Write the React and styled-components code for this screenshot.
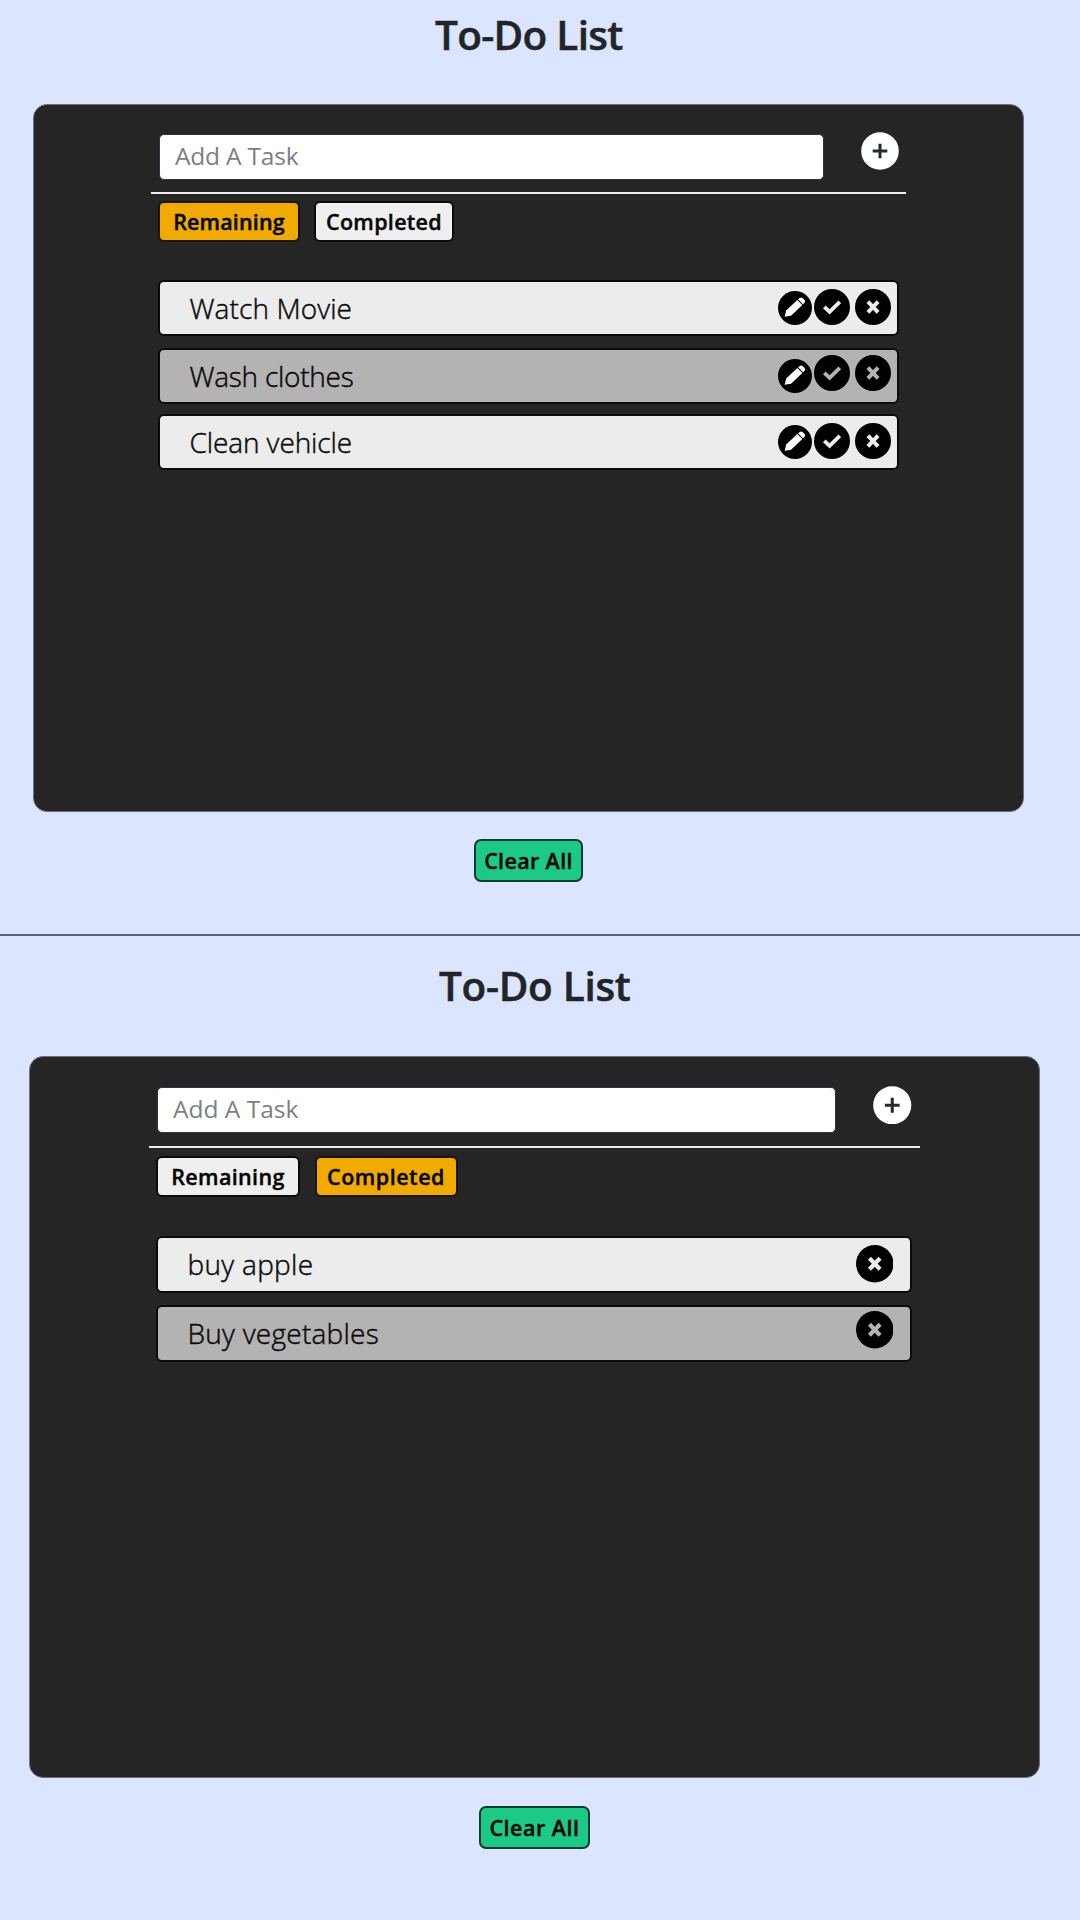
import React from 'react';
import styled, { createGlobalStyle, css } from 'styled-components';

const GlobalStyle = createGlobalStyle`
  *, *::before, *::after { box-sizing: border-box; }
  body {
    margin: 0;
    background: #dbe5fd;
    font-family: 'Open Sans', 'Noto Sans', sans-serif;
    color: #000;
  }
`;

const Page = styled.div`
  width: 1080px;
  height: 1920px;
  display: flex;
  flex-direction: column;
  overflow: hidden;
`;

const Board = styled.section`
  flex: none;
  height: ${(p) => p.$height}px;
  padding-left: ${(p) => p.$left}px;
  padding-top: ${(p) => p.$top}px;
  border-bottom: ${(p) => (p.$divided ? '2px solid #5f636c' : 'none')};
  display: flex;
  flex-direction: column;
  align-items: flex-start;
`;

const Title = styled.h1`
  margin: 0 0 0 ${(p) => p.$indent}px;
  height: ${(p) => p.$height}px;
  font-size: 40.5px;
  line-height: 56px;
  font-weight: 600;
  letter-spacing: ${(p) => p.$spacing}px;
  color: #212529;
  -webkit-text-stroke: 0.5px #212529;
  white-space: nowrap;
`;

const Panel = styled.main`
  width: ${(p) => p.$width}px;
  height: ${(p) => p.$height}px;
  padding: ${(p) => p.$padTop}px 0 0 ${(p) => p.$padLeft}px;
  background: #252525;
  border: 1px solid #6c7079;
  border-radius: 14px;
`;

const AddBar = styled.form`
  display: flex;
  width: ${(p) => p.$width}px;
  height: ${(p) => p.$height}px;
  padding-left: 8px;
  border-bottom: 2px solid #ececec;
`;

const TaskInput = styled.input`
  width: ${(p) => p.$width}px;
  height: 46px;
  margin: 0;
  padding: 0 15px 3px;
  border: 1px solid #2b3440;
  border-radius: 5px;
  background: #fff;
  font-family: inherit;
  font-size: 24.5px;
  letter-spacing: ${(p) => p.$spacing}px;
  outline: none;
  &::placeholder { color: #7b7f83; opacity: 1; }
`;

const PlainButton = styled.button`
  margin: 0;
  padding: 0;
  border: 0;
  background: none;
  color: inherit;
  display: block;
  line-height: 0;
`;

const AddButton = styled(PlainButton)`
  align-self: flex-start;
  margin: -1.5px 0 0 ${(p) => p.$gap}px;
`;

const Tabs = styled.nav`
  display: flex;
  gap: ${(p) => p.$gap}px;
  padding: ${(p) => p.$top}px 0 0 7px;
`;

const buttonText = css`
  font-family: inherit;
  font-weight: 600;
  font-size: 21.5px;
  line-height: 28px;
  color: #060606;
  -webkit-text-stroke: 0.4px #060606;
  white-space: nowrap;
`;

const Tab = styled.button`
  ${buttonText}
  width: ${(p) => p.$width}px;
  height: 41px;
  padding: 0;
  border: 2px solid ${(p) => (p.$active ? '#1c1200' : '#0b0b0b')};
  border-radius: 6px;
  background: ${(p) => (p.$active ? '#f0aa00' : '#efefef')};
  letter-spacing: ${(p) => p.$spacing}px;
`;

const List = styled.ul`
  list-style: none;
  margin: 0;
  padding: ${(p) => p.$top}px 0 0 7px;
  display: flex;
  flex-direction: column;
`;

const Row = styled.li`
  display: flex;
  align-items: flex-start;
  width: ${(p) => p.$width}px;
  height: ${(p) => p.$height}px;
  margin-bottom: ${(p) => p.$gap}px;
  padding-left: 29.5px;
  border: 2px solid #0b0b0b;
  border-radius: 6px;
  background: ${(p) => (p.$shaded ? '#b4b2b3' : '#ececec')};
  color: ${(p) => (p.$shaded ? '#b4b2b3' : '#ececec')};
`;

const TaskName = styled.span`
  flex: 1;
  font-size: 28px;
  line-height: 52px;
  font-weight: 300;
  color: #0a0a0a;
  -webkit-text-stroke: 0.45px #0a0a0a;
  letter-spacing: ${(p) => p.$spacing}px;
  white-space: nowrap;
`;

const Actions = styled.div`
  display: flex;
  align-items: flex-start;
  padding: ${(p) => p.$top}px ${(p) => p.$right}px 0 0;
`;

const EditButton = styled(PlainButton)`
  margin: ${(p) => p.$drop}px 2.5px 0 0;
`;

const DoneButton = styled(PlainButton)`
  margin-right: 5px;
`;

const ClearButton = styled.button`
  ${buttonText}
  width: ${(p) => p.$width}px;
  height: 43.5px;
  margin: ${(p) => p.$top}px 0 0 ${(p) => p.$indent}px;
  padding: 1px 0 0;
  border: 2px solid #12382f;
  border-radius: 7px;
  background: #1bca85;
  letter-spacing: ${(p) => p.$spacing}px;
`;

const PlusIcon = ({ size }) => (
  <svg width={size} height={size} viewBox="0 0 38 38">
    <circle cx="19" cy="19" r="18.8" fill="#fff" />
    <path d="M19 11.7V26.3M11.7 19H26.3" stroke="#252a35" strokeWidth="3" />
  </svg>
);

const PencilIcon = () => (
  <svg width="34" height="34" viewBox="0 0 34 34">
    <circle cx="17" cy="17" r="17" fill="#000" />
    <path d="M6.6 25.8 8.2 19.5 19.3 8.9 24.4 14 13 24.7Z" fill="#fff" />
    <path d="M20.1 8.2 21.8 6.9Q23.3 5.9 24.8 7.3L26.6 9.1Q27.9 10.5 26.4 12L24.9 13.2Z" fill="#fff" />
  </svg>
);

const CheckIcon = () => (
  <svg width="36" height="36" viewBox="0 0 36 36">
    <circle cx="18" cy="18" r="18" fill="#000" />
    <path d="M10.3 17.8 15.6 22.8 25.8 12.8" fill="none" stroke="currentColor" strokeWidth="3.8" />
  </svg>
);

const CrossIcon = ({ size }) => (
  <svg width={size} height={size} viewBox="0 0 36 36">
    <circle cx="18" cy="18" r="18" fill="#000" />
    <path d="M12.9 12.7 23.1 23.3M23.1 12.7 12.9 23.3" fill="none" stroke="currentColor" strokeWidth="4" />
  </svg>
);

const boards = [
  {
    active: 'Remaining',
    board: { $height: 936, $left: 33, $top: 6.5, $divided: true },
    title: { $indent: 402, $height: 97, $spacing: -0.7 },
    panel: { $width: 991, $height: 708, $padTop: 29, $padLeft: 117 },
    bar: { $width: 755, $height: 60.5 },
    input: { $width: 665, $spacing: -0.2 },
    addGap: 37,
    addSize: 38,
    tabGap: 14,
    tabsTop: 7,
    tabs: [
      { label: 'Remaining', $width: 142, $spacing: 0.15 },
      { label: 'Completed', $width: 140, $spacing: 0.3 },
    ],
    listTop: 37.5,
    row: { $width: 741, $height: 56.5 },
    actionsRight: 6,
    cross: 36,
    tasks: [
      { name: 'Watch Movie', $spacing: 0.1, $gap: 11.5, top: 7.5, drop: 1.5 },
      { name: 'Wash clothes', $spacing: -0.25, $gap: 9.5, shaded: true, top: 5, drop: 4 },
      { name: 'Clean vehicle', $spacing: -0.1, $gap: 0, top: 7, drop: 2 },
    ],
    clear: { $width: 109, $top: 27, $indent: 441, $spacing: 0.35 },
  },
  {
    active: 'Completed',
    board: { $height: 983, $left: 28.5, $top: 22, $divided: false },
    title: { $indent: 410.5, $height: 97.5, $spacing: -0.3 },
    panel: { $width: 1011, $height: 722, $padTop: 30.5, $padLeft: 119.5 },
    bar: { $width: 770.5, $height: 61 },
    input: { $width: 678.5, $spacing: 0 },
    addGap: 37.5,
    addSize: 38.5,
    tabGap: 14.5,
    tabsTop: 8,
    tabs: [
      { label: 'Remaining', $width: 144, $spacing: 0.35 },
      { label: 'Completed', $width: 143, $spacing: 0.5 },
    ],
    listTop: 39,
    row: { $width: 755.5, $height: 57 },
    actionsRight: 16.5,
    cross: 37.5,
    tasks: [
      { name: 'buy apple', $spacing: 0.3, $gap: 12, top: 7 },
      { name: 'Buy vegetables', $spacing: 0.25, $gap: 0, shaded: true, top: 4 },
    ],
    clear: { $width: 111, $top: 28, $indent: 450.5, $spacing: 0.5 },
  },
];

function TodoBoard({ data }) {
  return (
    <Board {...data.board}>
      <Title {...data.title}>To-Do List</Title>
      <Panel {...data.panel}>
        <AddBar {...data.bar}>
          <TaskInput {...data.input} placeholder="Add A Task" />
          <AddButton type="button" $gap={data.addGap} aria-label="Add">
            <PlusIcon size={data.addSize} />
          </AddButton>
        </AddBar>
        <Tabs $gap={data.tabGap} $top={data.tabsTop}>
          {data.tabs.map(({ label, ...tab }) => (
            <Tab key={label} {...tab} $active={label === data.active}>{label}</Tab>
          ))}
        </Tabs>
        <List $top={data.listTop}>
          {data.tasks.map((task) => (
            <Row key={task.name} {...data.row} $gap={task.$gap} $shaded={task.shaded}>
              <TaskName $spacing={task.$spacing}>{task.name}</TaskName>
              <Actions $top={task.top} $right={data.actionsRight}>
                {data.active === 'Remaining' && (
                  <>
                    <EditButton $drop={task.drop} aria-label="Edit"><PencilIcon /></EditButton>
                    <DoneButton aria-label="Done"><CheckIcon /></DoneButton>
                  </>
                )}
                <PlainButton aria-label="Delete"><CrossIcon size={data.cross} /></PlainButton>
              </Actions>
            </Row>
          ))}
        </List>
      </Panel>
      <ClearButton {...data.clear}>Clear All</ClearButton>
    </Board>
  );
}

export default function App() {
  return (
    <>
      <GlobalStyle />
      <Page>
        {boards.map((data) => <TodoBoard key={data.active} data={data} />)}
      </Page>
    </>
  );
}
